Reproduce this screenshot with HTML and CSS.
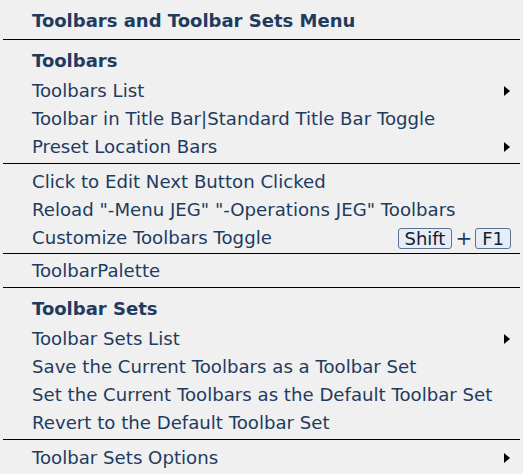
FILE: index.html
```html
<!DOCTYPE html>
<html>
<head>
<meta charset="utf-8">
<link rel="stylesheet" href="styles.css">
</head>
<body>
<div class="menu">
  <div class="title">Toolbars and Toolbar Sets Menu</div>
  <div class="sep sep-title"></div>
  <div class="heading">Toolbars</div>
  <div class="item"><span>Toolbars List</span><span class="arrow"></span></div>
  <div class="item"><span>Toolbar in Title Bar|Standard Title Bar Toggle</span></div>
  <div class="item"><span>Preset Location Bars</span><span class="arrow"></span></div>
  <div class="sep"></div>
  <div class="item"><span>Click to Edit Next Button Clicked</span></div>
  <div class="item"><span>Reload "-Menu JEG" "-Operations JEG" Toolbars</span></div>
  <div class="item"><span>Customize Toolbars Toggle</span><span class="keys"><kbd>Shift</kbd><span class="plus">+</span><kbd>F1</kbd></span></div>
  <div class="sep sep-tight"></div>
  <div class="item"><span>ToolbarPalette</span></div>
  <div class="sep sep-palette"></div>
  <div class="heading">Toolbar Sets</div>
  <div class="item"><span>Toolbar Sets List</span><span class="arrow"></span></div>
  <div class="item"><span>Save the Current Toolbars as a Toolbar Set</span></div>
  <div class="item"><span>Set the Current Toolbars as the Default Toolbar Set</span></div>
  <div class="item"><span>Revert to the Default Toolbar Set</span></div>
  <div class="sep"></div>
  <div class="item"><span>Toolbar Sets Options</span><span class="arrow"></span></div>
</div>
</body>
</html>
```
FILE: styles.css
```css
html, body {
  margin: 0;
  padding: 0;
  background: #f0f0f0;
}
.menu {
  width: 523px;
  box-sizing: border-box;
  padding: 6px 3px 0 3px;
  font-family: "DejaVu Sans", Verdana, sans-serif;
  font-size: 18.15px;
  color: #1f3b60;
}
.title {
  height: 28px;
  line-height: 29px;
  padding-left: 29px;
  font-weight: bold;
  font-size: 18px;
}
.sep {
  height: 1px;
  background: #000;
  margin: 2px 0 4px 0;
}
.sep-title {
  margin: 5px 0 6px 0;
}
.sep-tight {
  margin: 1px 0 3px 0;
}
.sep-palette {
  margin: 2px 0 6px 0;
}
.heading {
  height: 31px;
  line-height: 30px;
  padding-left: 29px;
  font-weight: bold;
  font-size: 18px;
}
.item {
  height: 28px;
  line-height: 28px;
  padding-left: 29px;
  padding-right: 9px;
  display: flex;
  align-items: center;
  justify-content: space-between;
  white-space: nowrap;
}
.arrow {
  width: 0;
  height: 0;
  border-top: 5px solid transparent;
  border-bottom: 5px solid transparent;
  border-left: 6px solid #000;
  margin-right: 1px;
}
.keys {
  display: flex;
  align-items: center;
  gap: 3px;
}
kbd {
  font-family: inherit;
  font-size: 18px;
  line-height: 19px;
  color: #14202e;
  background: #e6edf7;
  border: 1px solid #5b7390;
  border-radius: 3px;
  padding: 0 6px;
}
.plus {
  color: #1f3b60;
  font-size: 20px;
}
```
